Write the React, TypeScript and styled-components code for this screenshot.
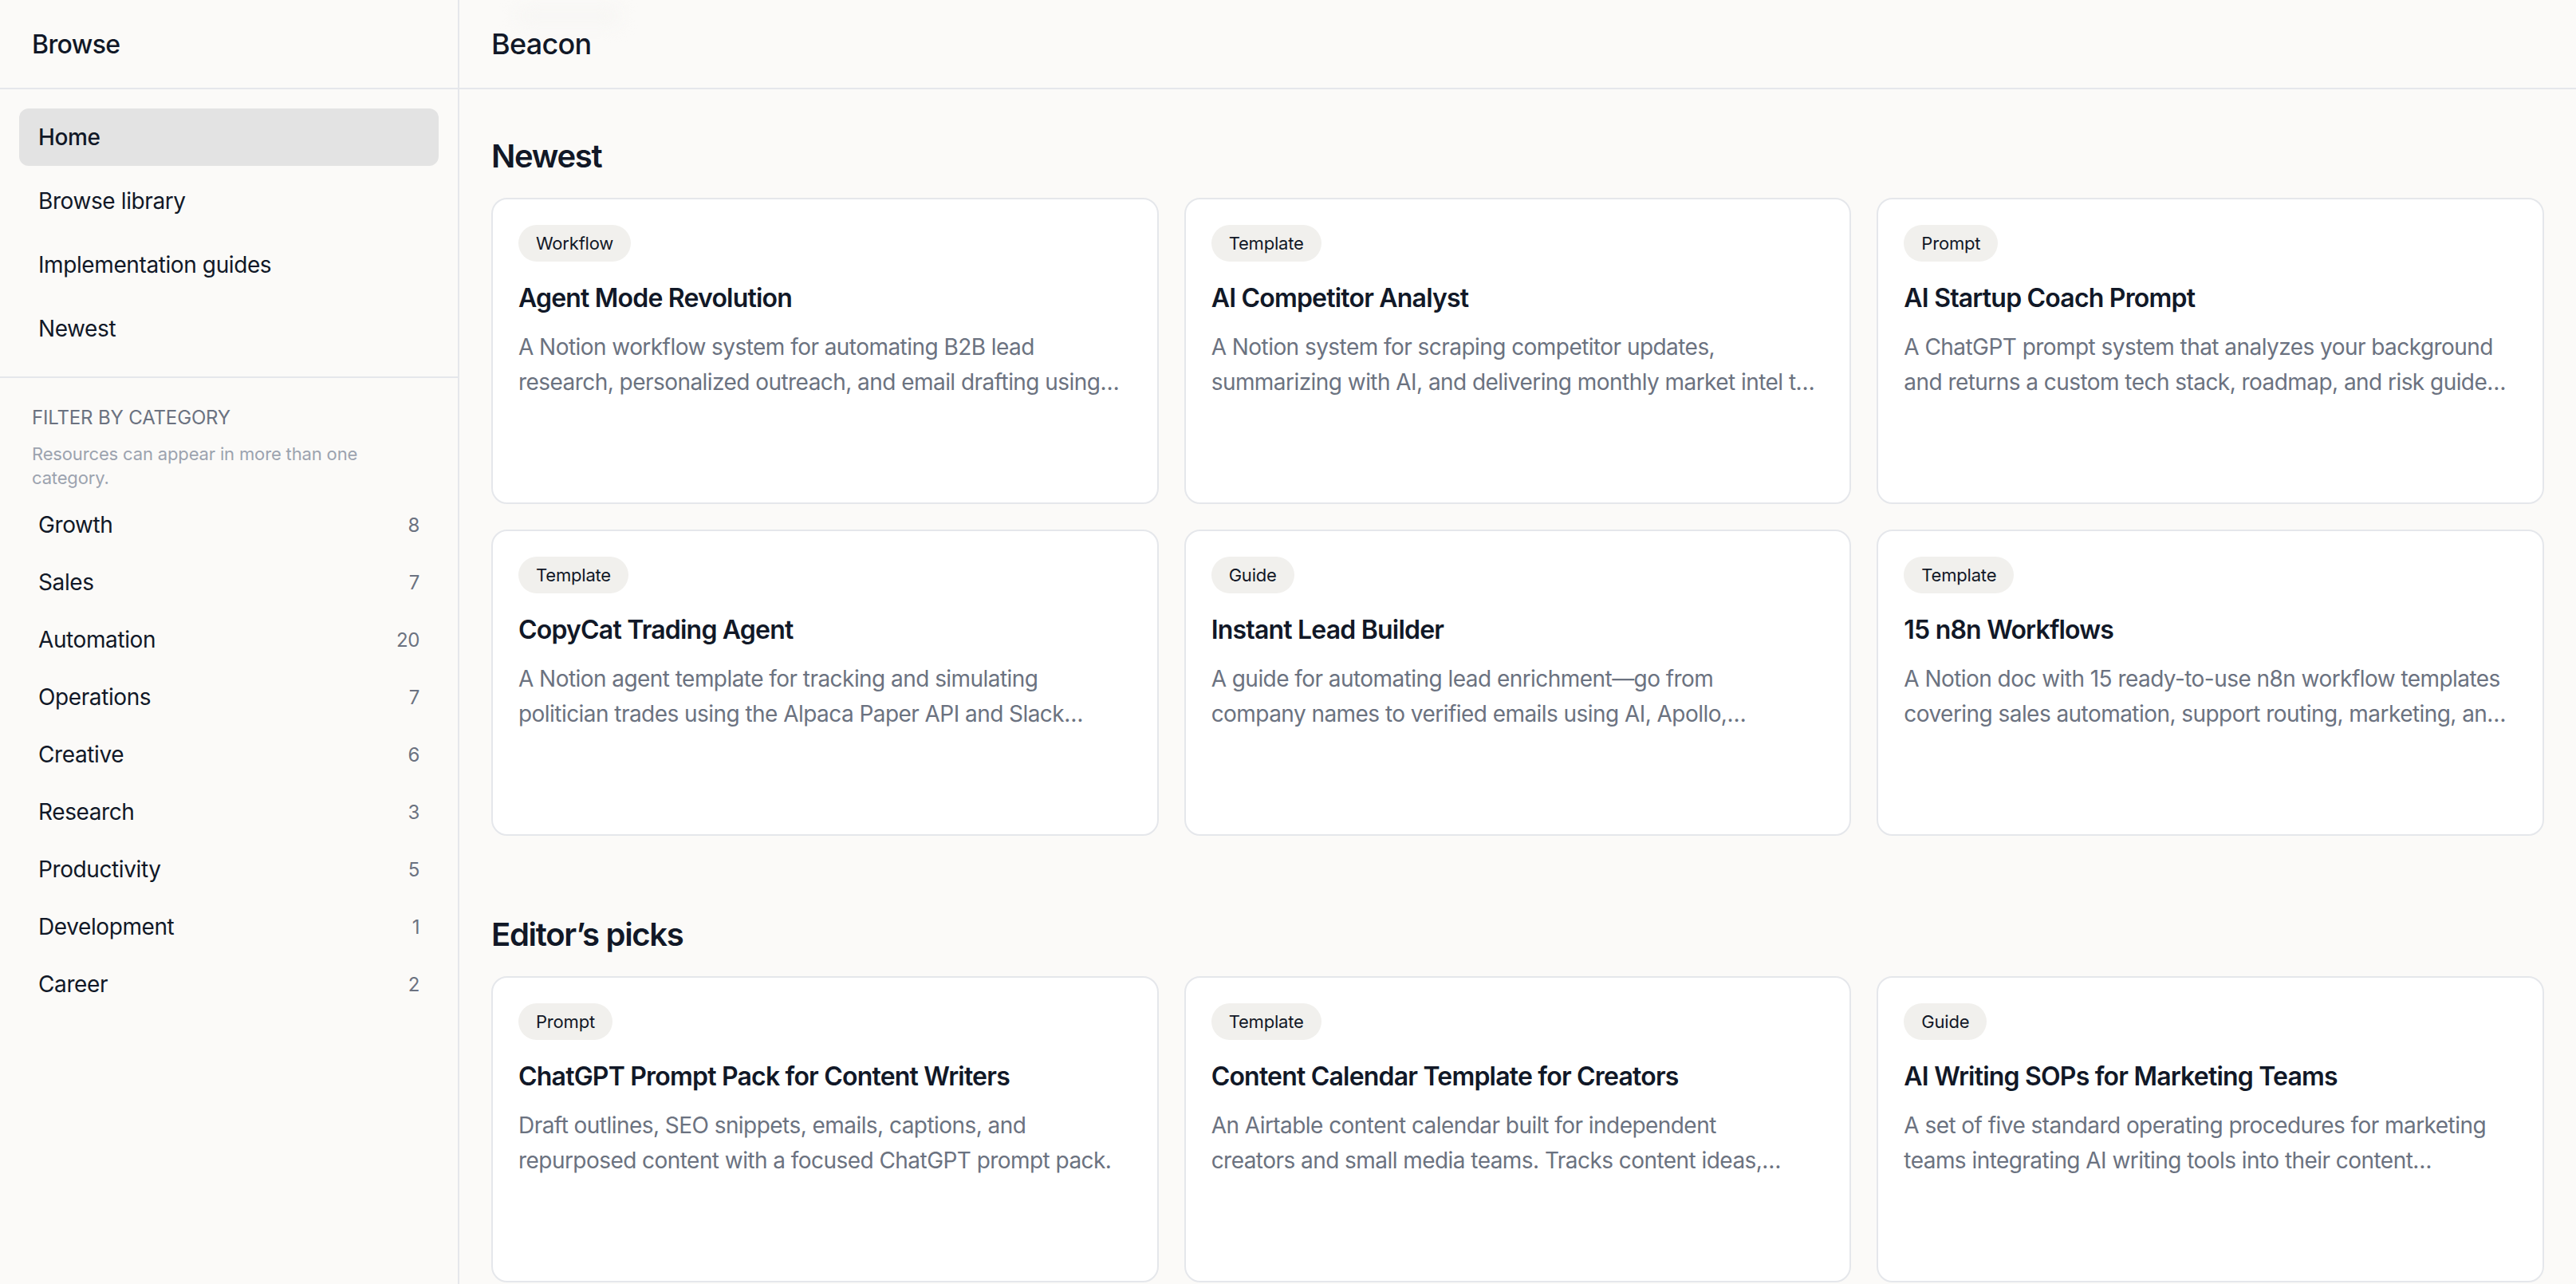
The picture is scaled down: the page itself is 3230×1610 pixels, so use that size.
import * as React from "react";
import styled, { createGlobalStyle } from "styled-components";

const GlobalStyle = createGlobalStyle`
  html, body {
    margin: 0;
    padding: 0;
    height: 100%;
    background: #fbfaf8;
    overflow: hidden;
  }
  * { box-sizing: border-box; }
  #root { height: 100%; }
`;

const Page = styled.div`
  display: flex;
  height: 1610px;
  width: 3230px;
  overflow: hidden;
  color: #111827;
  font-family: "Inter", "Noto Sans", sans-serif;
`;

const Sidebar = styled.aside`
  flex: 0 0 576px;
  display: flex;
  flex-direction: column;
  border-right: 2px solid #e5e7eb;
`;

const TopBar = styled.header<{ $large?: boolean }>`
  position: relative;
  flex: 0 0 112px;
  display: flex;
  align-items: center;
  padding: 0 40px;
  border-bottom: 2px solid #e5e7eb;
  font-size: ${(p) => (p.$large ? "36px" : "32px")};
  font-weight: 500;
  letter-spacing: ${(p) => (p.$large ? "-0.7px" : "-0.6px")};
`;

// faint blurred pill left behind the title in the reference
const TitleGhost = styled.div`
  position: absolute;
  top: 8px;
  left: 72px;
  width: 130px;
  height: 24px;
  border-radius: 12px;
  background: #f7f6f4;
  filter: blur(10px);
`;

const TitleText = styled.span`
  position: relative;
`;

const Nav = styled.nav`
  display: flex;
  flex-direction: column;
  gap: 8px;
  padding: 24px;
  border-bottom: 2px solid #e5e7eb;
`;

const NavItem = styled.a<{ $active?: boolean }>`
  display: flex;
  align-items: center;
  height: 72px;
  padding: 0 24px;
  border-radius: 12px;
  font-size: 28px;
  font-weight: ${(p) => (p.$active ? 500 : 400)};
  letter-spacing: -0.4px;
  background: ${(p) => (p.$active ? "#e3e3e3" : "transparent")};
`;

const Filter = styled.section`
  display: flex;
  flex-direction: column;
  padding: 34px 24px;
`;

const FilterTitle = styled.div`
  padding: 0 16px;
  font-size: 24px;
  line-height: 32px;
  color: #6b7280;
  letter-spacing: -0.15px;
`;

const FilterNote = styled.p`
  margin: 14px 0 8px;
  padding: 0 16px;
  font-size: 22px;
  line-height: 30px;
  color: #9ca3af;
  letter-spacing: -0.15px;
`;

const CategoryRow = styled.a`
  display: flex;
  align-items: center;
  justify-content: space-between;
  height: 72px;
  padding: 0 24px;
  font-size: 28px;
  letter-spacing: -0.4px;
`;

const CategoryCount = styled.span`
  font-size: 24px;
  color: #6b7280;
`;

const Main = styled.main`
  flex: 1;
  min-width: 0;
  display: flex;
  flex-direction: column;
`;

const Content = styled.div`
  display: flex;
  flex-direction: column;
  gap: 96px;
  padding: 56px 40px 0;
`;

const SectionTitle = styled.h2`
  margin: 0 0 24px;
  font-size: 40px;
  line-height: 56px;
  font-weight: 600;
  letter-spacing: -1.3px;
`;

const CardGrid = styled.div`
  display: grid;
  grid-template-columns: repeat(3, 1fr);
  gap: 32px;
`;

const Card = styled.article`
  height: 384px;
  padding: 32px;
  background: #fff;
  border: 2px solid #e5e7eb;
  border-radius: 20px;
`;

const Tag = styled.span`
  display: inline-flex;
  align-items: center;
  height: 46px;
  padding: 0 22px;
  border-radius: 23px;
  background: #f1f0ed;
  font-size: 22px;
  letter-spacing: -0.2px;
`;

const CardTitle = styled.h3`
  margin: 24px 0 17px;
  font-size: 32px;
  line-height: 44px;
  font-weight: 600;
  letter-spacing: -0.8px;
  white-space: nowrap;
`;

const Desc = styled.p`
  margin: 0;
  font-size: 28px;
  line-height: 44px;
  color: #6b7280;
  letter-spacing: -0.55px;
`;

const DescLine = styled.span`
  display: block;
  white-space: nowrap;
`;

type Resource = { tag: string; title: string; lines: [string, string] };

const newest: Resource[] = [
  { tag: "Workflow", title: "Agent Mode Revolution", lines: ["A Notion workflow system for automating B2B lead", "research, personalized outreach, and email drafting using…"] },
  { tag: "Template", title: "AI Competitor Analyst", lines: ["A Notion system for scraping competitor updates,", "summarizing with AI, and delivering monthly market intel t…"] },
  { tag: "Prompt", title: "AI Startup Coach Prompt", lines: ["A ChatGPT prompt system that analyzes your background", "and returns a custom tech stack, roadmap, and risk guide…"] },
  { tag: "Template", title: "CopyCat Trading Agent", lines: ["A Notion agent template for tracking and simulating", "politician trades using the Alpaca Paper API and Slack…"] },
  { tag: "Guide", title: "Instant Lead Builder", lines: ["A guide for automating lead enrichment—go from", "company names to verified emails using AI, Apollo,…"] },
  { tag: "Template", title: "15 n8n Workflows", lines: ["A Notion doc with 15 ready-to-use n8n workflow templates", "covering sales automation, support routing, marketing, an…"] },
];

const picks: Resource[] = [
  { tag: "Prompt", title: "ChatGPT Prompt Pack for Content Writers", lines: ["Draft outlines, SEO snippets, emails, captions, and", "repurposed content with a focused ChatGPT prompt pack."] },
  { tag: "Template", title: "Content Calendar Template for Creators", lines: ["An Airtable content calendar built for independent", "creators and small media teams. Tracks content ideas,…"] },
  { tag: "Guide", title: "AI Writing SOPs for Marketing Teams", lines: ["A set of five standard operating procedures for marketing", "teams integrating AI writing tools into their content…"] },
];

const navItems = ["Home", "Browse library", "Implementation guides", "Newest"];

const categories: [string, number][] = [
  ["Growth", 8],
  ["Sales", 7],
  ["Automation", 20],
  ["Operations", 7],
  ["Creative", 6],
  ["Research", 3],
  ["Productivity", 5],
  ["Development", 1],
  ["Career", 2],
];

function ResourceSection({ title, items }: { title: string; items: Resource[] }) {
  return (
    <section>
      <SectionTitle>{title}</SectionTitle>
      <CardGrid>
        {items.map((item) => (
          <Card key={item.title}>
            <Tag>{item.tag}</Tag>
            <CardTitle>{item.title}</CardTitle>
            <Desc>
              {item.lines.map((line) => (
                <DescLine key={line}>{line}</DescLine>
              ))}
            </Desc>
          </Card>
        ))}
      </CardGrid>
    </section>
  );
}

export default function App() {
  return (
    <Page>
      <GlobalStyle />
      <Sidebar>
        <TopBar>Browse</TopBar>
        <Nav>
          {navItems.map((label, i) => (
            <NavItem key={label} $active={i === 0}>
              {label}
            </NavItem>
          ))}
        </Nav>
        <Filter>
          <FilterTitle>FILTER BY CATEGORY</FilterTitle>
          <FilterNote>Resources can appear in more than one category.</FilterNote>
          {categories.map(([name, count]) => (
            <CategoryRow key={name}>
              {name}
              <CategoryCount>{count}</CategoryCount>
            </CategoryRow>
          ))}
        </Filter>
      </Sidebar>
      <Main>
        <TopBar $large>
          <TitleGhost />
          <TitleText>Beacon</TitleText>
        </TopBar>
        <Content>
          <ResourceSection title="Newest" items={newest} />
          <ResourceSection title="Editor’s picks" items={picks} />
        </Content>
      </Main>
    </Page>
  );
}
